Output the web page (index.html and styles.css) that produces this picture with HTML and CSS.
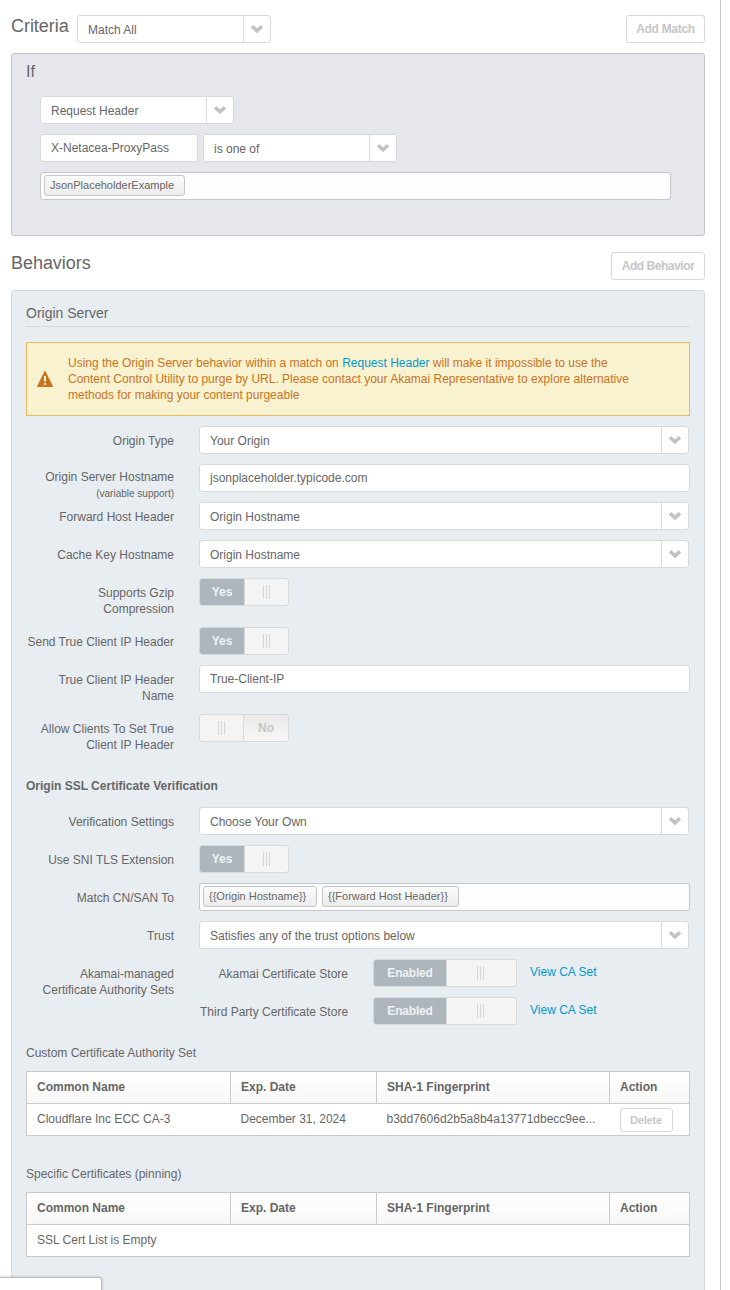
FILE: index.html
```html
<!DOCTYPE html>
<html lang="en">
<head>
<meta charset="utf-8">
<title>Property rule</title>
<link rel="stylesheet" href="styles.css">
</head>
<body>
<svg width="0" height="0" class="defs">
  <symbol id="chev" viewBox="0 0 14 10"><path d="M2 2.2 L7 6.8 L12 2.2" fill="none" stroke="#c2c2c2" stroke-width="3.6"/></symbol>
</svg>
<main class="page">
  <header class="bar bar-criteria">
    <h2 class="title">Criteria</h2>
    <div class="select select-sm"><span class="value">Match All</span><span class="arrow"><svg><use href="#chev"/></svg></span></div>
    <button class="btn push btn-match">Add Match</button>
  </header>

  <section class="panel criteria">
    <h3 class="if">If</h3>
    <div class="conditions">
      <div class="line"><div class="select select-sm"><span class="value">Request Header</span><span class="arrow"><svg><use href="#chev"/></svg></span></div></div>
      <div class="line">
        <div class="input input-sm">X-Netacea-ProxyPass</div>
        <div class="select select-sm"><span class="value">is one of</span><span class="arrow"><svg><use href="#chev"/></svg></span></div>
      </div>
      <div class="tags"><span class="tag tag-a">JsonPlaceholderExample</span></div>
    </div>
  </section>

  <header class="bar bar-behaviors">
    <h2 class="title">Behaviors</h2>
    <button class="btn push btn-behavior">Add Behavior</button>
  </header>

  <section class="panel behaviors">
    <h3 class="section">Origin Server</h3>
    <div class="alert">
      <svg class="warn" viewBox="0 0 16 16"><path d="M8 .8 15.2 15.2H.8Z" fill="#c9741e" stroke="#c9741e" stroke-width="1.4" stroke-linejoin="round"/><path d="M7 5h2v5.5H7zM7 12h2v2H7z" fill="#f9f2d0"/></svg>
      <p class="alert-text">Using the Origin Server behavior within a match on <a class="link">Request Header</a> will make it impossible to use the<br>Content Control Utility to purge by URL. Please contact your Akamai Representative to explore alternative<br>methods for making your content purgeable</p>
    </div>

    <div class="form">
      <div class="row"><label class="label">Origin Type</label><div class="select"><span class="value">Your Origin</span><span class="arrow"><svg><use href="#chev"/></svg></span></div></div>
      <div class="row row-fixed"><label class="label label-high">Origin Server Hostname<small class="hint">(variable support)</small></label><div class="input">jsonplaceholder.typicode.com</div></div>
      <div class="row"><label class="label">Forward Host Header</label><div class="select"><span class="value">Origin Hostname</span><span class="arrow"><svg><use href="#chev"/></svg></span></div></div>
      <div class="row"><label class="label">Cache Key Hostname</label><div class="select"><span class="value">Origin Hostname</span><span class="arrow"><svg><use href="#chev"/></svg></span></div></div>
      <div class="row"><label class="label">Supports Gzip<br>Compression</label><div class="toggle"><span class="on">Yes</span><span class="grip"><i class="lines"></i></span></div></div>
      <div class="row"><label class="label">Send True Client IP Header</label><div class="toggle"><span class="on">Yes</span><span class="grip"><i class="lines"></i></span></div></div>
      <div class="row"><label class="label">True Client IP Header<br>Name</label><div class="input">True-Client-IP</div></div>
      <div class="row"><label class="label">Allow Clients To Set True<br>Client IP Header</label><div class="toggle"><span class="grip"><i class="lines"></i></span><span class="off">No</span></div></div>
    </div>

    <h4 class="sub">Origin SSL Certificate Verification</h4>
    <div class="form">
      <div class="row"><label class="label">Verification Settings</label><div class="select"><span class="value">Choose Your Own</span><span class="arrow"><svg><use href="#chev"/></svg></span></div></div>
      <div class="row"><label class="label">Use SNI TLS Extension</label><div class="toggle"><span class="on">Yes</span><span class="grip"><i class="lines"></i></span></div></div>
      <div class="row"><label class="label">Match CN/SAN To</label><div class="tags"><span class="tag tag-b">{{Origin Hostname}}</span><span class="tag tag-c">{{Forward Host Header}}</span></div></div>
      <div class="row"><label class="label">Trust</label><div class="select"><span class="value">Satisfies any of the trust options below</span><span class="arrow"><svg><use href="#chev"/></svg></span></div></div>
      <div class="row">
        <label class="label">Akamai-managed<br>Certificate Authority Sets</label>
        <div class="stores">
          <div class="store"><label class="label">Akamai Certificate Store</label><div class="toggle wide"><span class="on">Enabled</span><span class="grip"><i class="lines"></i></span></div><a class="link view">View CA Set</a></div>
          <div class="store"><label class="label">Third Party Certificate Store</label><div class="toggle wide"><span class="on">Enabled</span><span class="grip"><i class="lines"></i></span></div><a class="link view">View CA Set</a></div>
        </div>
      </div>
    </div>

    <p class="caption">Custom Certificate Authority Set</p>
    <table class="table">
      <tr><th class="c1">Common Name</th><th class="c2">Exp. Date</th><th class="c3">SHA-1 Fingerprint</th><th class="c4">Action</th></tr>
      <tr><td>Cloudflare Inc ECC CA-3</td><td>December 31, 2024</td><td>b3dd7606d2b5a8b4a13771dbecc9ee...</td><td class="act"><button class="btn btn-xs">Delete</button></td></tr>
    </table>
    <p class="caption caption-2">Specific Certificates (pinning)</p>
    <table class="table">
      <tr><th class="c1">Common Name</th><th class="c2">Exp. Date</th><th class="c3">SHA-1 Fingerprint</th><th class="c4">Action</th></tr>
      <tr><td colspan="4">SSL Cert List is Empty</td></tr>
    </table>
  </section>
</main>
<div class="status"></div>
</body>
</html>
```
FILE: styles.css
```css
* { box-sizing: border-box; }
body { margin: 0; width: 730px; height: 1290px; overflow: hidden; background: #fff; color: #666; font: 12px/16px "Liberation Sans", Arial, sans-serif; }
h2, h3, h4, p { margin: 0; font-weight: normal; }
.defs { position: absolute; }
.page { width: 721px; height: 1290px; padding: 15px 15px 0 11px; border-right: 1px solid #c8c8c8; overflow: hidden; }
.bar { display: flex; align-items: flex-start; height: 28px; }
.title { font-size: 18px; line-height: 22px; letter-spacing: -0.05px; }
.bar-criteria .title { width: 66px; }
.push { margin-left: auto; }
.btn { height: 28px; padding: 0; border: 1px solid #d8d8d8; border-radius: 3px; background: #fff; color: #c6c6c6; font: bold 12px/26px "Liberation Sans", Arial, sans-serif; white-space: nowrap; }
.btn-match { width: 79px; letter-spacing: -0.3px; }
.btn-behavior { width: 94px; letter-spacing: -0.45px; }
.btn-xs { height: 24px; width: 53px; font-size: 11px; line-height: 22px; letter-spacing: -0.15px; display: block; }
.select, .input { height: 28px; border: 1px solid #d8d9da; border-radius: 3px; background: #fff; white-space: nowrap; }
.select { display: flex; width: 490px; }
.select-sm { width: 194px; }
.value { flex: 1; padding-left: 10px; line-height: 28px; }
.arrow { width: 27px; border-left: 1px solid #d8d9da; display: flex; padding: 8px 0 0 6px; }
.arrow svg { width: 14px; height: 10px; }
.input { width: 491px; padding-left: 10px; line-height: 26px; }
.input-sm { width: 158px; }

.panel { width: 694px; border: 1px solid #c3c4c7; border-radius: 3px; }
.criteria { height: 183px; margin-top: 10px; background: #e6e7ec; padding: 8px 14px 0; }
.if { font-size: 16px; line-height: 20px; }
.conditions { display: flex; flex-direction: column; gap: 10px; padding: 14px 0 0 14px; }
.line { display: flex; gap: 5px; }
.tags { display: flex; gap: 5px; width: 631px; height: 28px; padding: 2px 3px; border: 1px solid #c6c7c9; border-radius: 3px; background: #fdfdfd; }
.tag { height: 21px; padding-left: 5px; border: 1px solid #c6c6c6; border-radius: 3px; background: linear-gradient(#fbfbfb, #ececec); font-size: 11px; line-height: 19px; white-space: nowrap; }
.tag-a { width: 141px; }
.tag-b { width: 114px; }
.tag-c { width: 137px; }

.bar-behaviors { margin-top: 16px; }
.behaviors { height: 1040px; margin-top: 10px; padding: 13px 14px 0; background: #e8edf1; border-color: #d6d8da; }
.section { height: 23px; border-bottom: 1px solid #d6d8da; font-size: 14px; line-height: 18px; }
.alert { display: flex; width: 664px; height: 74px; margin-top: 15px; border: 1px solid #ecb95c; background: #f9f2d0; color: #c9741e; }
.warn { width: 16px; height: 16px; margin: 28px 15px 0 10px; }
.alert-text { padding-top: 12px; white-space: nowrap; }
.link { color: #0099cc; }
.form { display: flex; flex-direction: column; gap: 10px; margin-top: 10px; }
.row { display: flex; gap: 25px; min-height: 28px; }
.row-fixed { height: 28px; }
.label { width: 148px; padding-top: 7px; text-align: right; white-space: nowrap; }
.label-high { padding-top: 5px; }
.hint { display: block; font-size: 10px; line-height: 18px; }
.row .tags { width: 491px; }
.toggle { display: flex; width: 90px; height: 28px; border: 1px solid #d8d9da; border-radius: 3px; background: #f4f4f4; font-weight: bold; text-align: center; line-height: 26px; overflow: hidden; }
.on { width: 45px; background: #adb5bd; color: #f0f2f4; border-right: 1px solid #d8d9da; }
.grip { flex: 1; display: flex; justify-content: center; align-items: center; }
.off { width: 45px; border-left: 1px solid #d8d9da; background: linear-gradient(#e9e9e9, #f7f7f7); color: #c6c6c6; }
.lines { width: 7px; height: 14px; border: 1px solid #d6d6d6; border-width: 0 1px; background: linear-gradient(#d6d6d6, #d6d6d6) center / 1px 100% no-repeat; }
.wide { width: 144px; margin-left: 25px; letter-spacing: -0.2px; }
.wide .on { width: 73px; }
.wide .grip { padding-right: 2px; }
.stores { display: flex; flex-direction: column; gap: 10px; padding-left: 1px; }
.store { display: flex; height: 28px; }
.view { margin-left: 13px; padding-top: 5px; }
.sub { margin-top: 25px; font-weight: bold; }
.sub + .form { margin-top: 13px; }
.caption { margin-top: 20px; }
.caption-2 { margin-top: 30px; }
.table { width: 664px; margin-top: 10px; border-collapse: collapse; table-layout: fixed; background: #fff; }
.table, th { border: 1px solid #c8cacc; }
.table tr { height: 32px; }
th, td { padding: 0 0 1px 10px; text-align: left; white-space: nowrap; }
th { background: linear-gradient(#fff, #f7f7f7); font-weight: bold; }
.c1 { width: 204px; } .c2 { width: 146px; } .c3 { width: 233px; }
.act { padding: 0 0 0 10px; }
.status { position: fixed; left: -2px; top: 1277px; width: 104px; height: 20px; background: #fff; border: 1px solid #bbb; border-radius: 0 3px 0 0; box-shadow: 0 0 3px rgba(0,0,0,.25); }
```
